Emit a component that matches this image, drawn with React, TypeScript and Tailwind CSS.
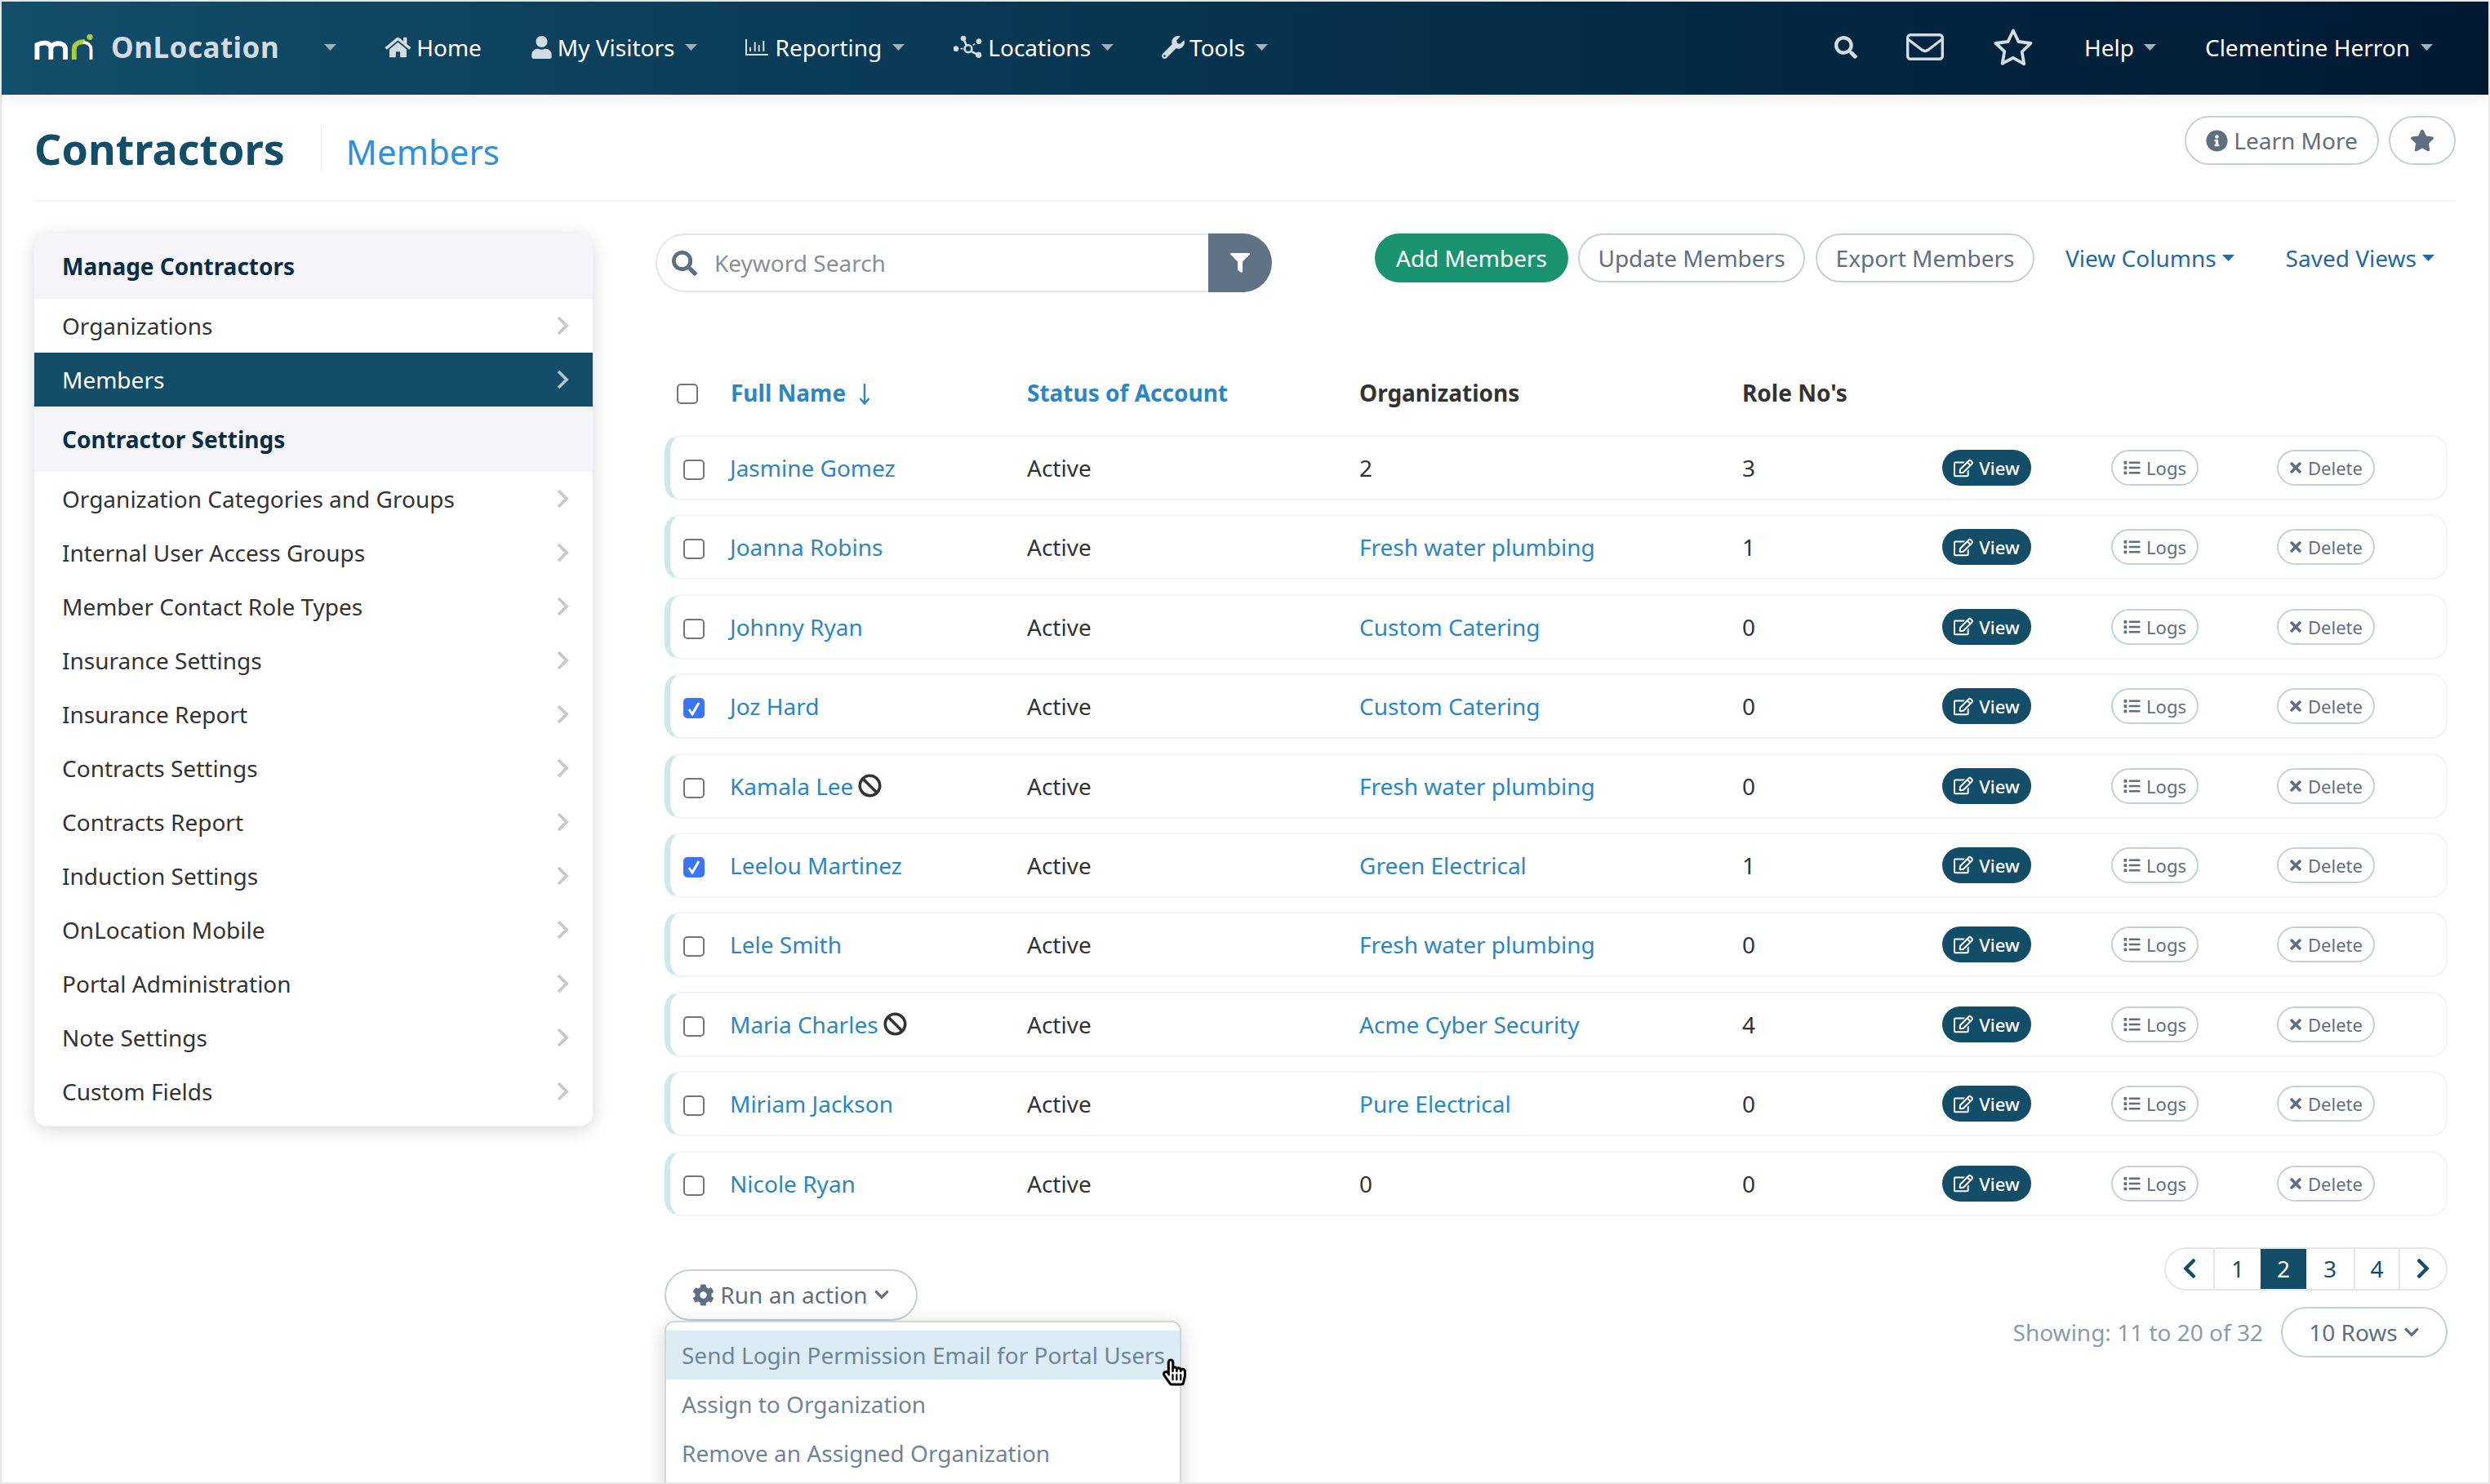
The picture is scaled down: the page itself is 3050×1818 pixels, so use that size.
import { FaBan, FaChevronDown, FaChevronLeft, FaChevronRight, FaCog, FaFilter, FaHandPointer, FaHome, FaInfoCircle, FaList, FaRegEdit, FaRegHandPointer, FaSearch, FaStar, FaTimes, FaUser, FaWrench } from 'react-icons/fa';

const manageItems = ['Organizations', 'Members'];

const settingsItems = [
  'Organization Categories and Groups',
  'Internal User Access Groups',
  'Member Contact Role Types',
  'Insurance Settings',
  'Insurance Report',
  'Contracts Settings',
  'Contracts Report',
  'Induction Settings',
  'OnLocation Mobile',
  'Portal Administration',
  'Note Settings',
  'Custom Fields',
];

type Member = { name: string; org: string; roles: string; checked?: boolean; banned?: boolean };

const members: Member[] = [
  { name: 'Jasmine Gomez', org: '2', roles: '3' },
  { name: 'Joanna Robins', org: 'Fresh water plumbing', roles: '1' },
  { name: 'Johnny Ryan', org: 'Custom Catering', roles: '0' },
  { name: 'Joz Hard', org: 'Custom Catering', roles: '0', checked: true },
  { name: 'Kamala Lee', org: 'Fresh water plumbing', roles: '0', banned: true },
  { name: 'Leelou Martinez', org: 'Green Electrical', roles: '1', checked: true },
  { name: 'Lele Smith', org: 'Fresh water plumbing', roles: '0' },
  { name: 'Maria Charles', org: 'Acme Cyber Security', roles: '4', banned: true },
  { name: 'Miriam Jackson', org: 'Pure Electrical', roles: '0' },
  { name: 'Nicole Ryan', org: '0', roles: '0' },
];

function Caret({ className }: { className: string }) {
  return (
    <svg viewBox="0 0 15 8" className={className}>
      <path d="M0 0h15L7.5 8z" fill="currentColor" />
    </svg>
  );
}

function MriLogo() {
  return (
    <svg viewBox="0 0 72 34" className="h-[34px] w-[72px]">
      <g fill="none" strokeWidth="5.8">
        <path d="M3.4 32V14c5-3 17-5 17 5v13M20.5 19c0-9 17.600-9 17.600 0v13" stroke="#fff" />
        <path d="M48.8 32V19c0-6 6-9 13-9" stroke="#a9cf38" />
        <path d="M60 10.600c6 1 9.500 3 9.500 9V32" stroke="#fff" strokeWidth="3.8" />
      </g>
      <circle cx="68" cy="4.300" r="3.600" fill="#a9cf38" />
    </svg>
  );
}

function ReportingIcon() {
  return (
    <svg viewBox="0 0 28 20" className="h-[20px] w-[28px] text-[#d3dce2]" fill="none" stroke="currentColor">
      <path d="M1 0v19h27" strokeWidth="2" />
      <path d="M6 10v5M11.700 3.500V15M16.700 7v8M22.300 2v13" strokeWidth="2" />
    </svg>
  );
}

function NetworkIcon() {
  return (
    <svg viewBox="0 0 35 27" className="h-[27px] w-[35px] text-[#d3dce2]" fill="none" stroke="currentColor">
      <circle cx="18" cy="15.700" r="4.400" strokeWidth="2.600" />
      <path d="M12 3l4 9M21 18.700l9.500 4.600" strokeWidth="2.600" />
      <path d="M31 6.700l-9.500 6M3 15.700h10" strokeWidth="1.800" strokeDasharray="3 2.500" />
      <circle cx="12" cy="3" r="3" fill="currentColor" />
      <circle cx="31" cy="6.700" r="3" fill="currentColor" />
      <circle cx="30.700" cy="23.300" r="3.300" fill="currentColor" />
      <circle cx="3" cy="15.700" r="3" fill="currentColor" />
    </svg>
  );
}

function MailIcon() {
  return (
    <svg viewBox="0 0 46 33" className="h-[33px] w-[46px] text-[#d3dce2]" fill="none" stroke="currentColor" strokeWidth="3.400">
      <rect x="1.700" y="1.700" width="42.600" height="29.600" rx="3.500" />
      <path d="M2 7l17 13c2.500 1.800 5.500 1.800 8 0L44 7" />
    </svg>
  );
}

function StarIcon() {
  return (
    <svg viewBox="0 0 48 46" className="h-[46px] w-[48px] text-[#d3dce2]" fill="none" stroke="currentColor" strokeWidth="3.800" strokeLinejoin="round">
      <path d="M24 2.500l6.500 13.500 15 2-10.800 10.500 2.600 14.800L24 35.800l-13.300 7 2.600-14.800L2.500 18l15-2z" />
    </svg>
  );
}

function Checkbox({ checked }: { checked?: boolean }) {
  return (
    <span className={`mt-[3px] flex h-[25px] w-[26px] items-center justify-center rounded-[5px] border-2 ${checked ? 'border-[#3a74f8] bg-[#3a74f8]' : 'border-[#757575] bg-white'}`}>
      {checked && (
        <svg viewBox="0 0 16 18" className="h-[18px] w-[16px]" fill="none" stroke="#fff" strokeWidth="3">
          <path d="M2 10l4 6 8-14" />
        </svg>
      )}
    </span>
  );
}

function SideRow({ label, active }: { label: string; active?: boolean }) {
  return (
    <div className={`flex h-[66px] items-center justify-between pl-[34px] pr-[29px] ${active ? 'bg-[#134d68] text-white' : 'text-[#333]'}`}>
      <span>{label}</span>
      <svg viewBox="0 0 15 24" className={`h-[24px] w-[15px] ${active ? 'text-[#b4c4cd]' : 'text-[#c6c8c9]'}`} fill="none" stroke="currentColor" strokeWidth="3.800">
        <path d="M2 2l10 10L2 22" />
      </svg>
    </div>
  );
}

function SideHeading({ label }: { label: string }) {
  return <div className="flex h-[80px] items-center bg-[#f4f4f9] pl-[34px] font-bold text-[#0b2c45]">{label}</div>;
}

function PillButton({ children, className }: { children: React.ReactNode; className?: string }) {
  return <button className={`flex items-center rounded-full border-2 border-[#c3d1d5] bg-white text-[#5f6e82] ${className ?? ''}`}>{children}</button>;
}

function MemberRow({ member }: { member: Member }) {
  const orgIsLink = isNaN(Number(member.org));
  return (
    <div className="mb-[17.4px] flex h-[80px] items-center rounded-[20px] border-2 border-l-[7px] border-[#f1f4f5] border-l-[#cfe8ec]">
      <div className="flex w-[73px] shrink-0 pl-[16px] pt-[2px]">
        <Checkbox checked={member.checked} />
      </div>
      <div className="flex w-[364px] shrink-0 items-center text-[#2b86c5]">
        {member.name}
        {member.banned && <FaBan className="ml-[6px] h-[29px] w-[29px] text-[#333]" />}
      </div>
      <div className="w-[407px] shrink-0 text-[#333]">Active</div>
      <div className={`w-[469px] shrink-0 ${orgIsLink ? 'text-[#2b86c5]' : 'text-[#333]'}`}>{member.org}</div>
      <div className="w-[245px] shrink-0 text-[#333]">{member.roles}</div>
      <div className="w-[207px] shrink-0">
        <button className="flex h-[44px] w-[109px] items-center justify-center gap-[7px] rounded-full bg-[#134d68] text-[22px] font-medium text-white">
          <FaRegEdit className="h-[23px] w-[24px]" />
          View
        </button>
      </div>
      <div className="w-[203px] shrink-0">
        <PillButton className="h-[44px] w-[107px] justify-center gap-[7px] text-[22px]">
          <FaList className="h-[20px] w-[21px]" />
          Logs
        </PillButton>
      </div>
      <PillButton className="h-[44px] w-[120px] justify-center gap-[7px] text-[22px]">
        <FaTimes className="h-[20px] w-[16px]" />
        Delete
      </PillButton>
    </div>
  );
}

export default function App() {
  return (
    <div className="h-[1818px] w-[3050px] overflow-hidden border-2 border-[#e6e6e6] bg-white font-['Noto_Sans',sans-serif] text-[28px] leading-none">
      <header className="relative z-10 flex h-[114px] items-center bg-linear-to-r from-[#134e6a] to-[#011933] pb-[3px] pl-[40px] pr-[68px] text-white shadow-[0_6px_16px_rgba(0,0,0,0.07)]">
        <MriLogo />
        <span className="ml-[22px] text-[35px] font-bold tracking-[0.5px] text-[#d3dce2]">OnLocation</span>
        <Caret className="ml-[55px] h-[8px] w-[15px] text-[#9fb0bb]" />

        <FaHome className="ml-[59px] h-[28px] w-[33px] text-[#d3dce2]" />
        <span className="ml-[6px]">Home</span>

        <FaUser className="ml-[61px] h-[28px] w-[25px] text-[#d3dce2]" />
        <span className="ml-[7px]">My Visitors</span>
        <Caret className="ml-[12px] h-[8px] w-[15px] text-[#9fb0bb]" />

        <span className="ml-[59px]"><ReportingIcon /></span>
        <span className="ml-[9px]">Reporting</span>
        <Caret className="ml-[13px] h-[8px] w-[15px] text-[#9fb0bb]" />

        <span className="ml-[60px]"><NetworkIcon /></span>
        <span className="ml-[7px]">Locations</span>
        <Caret className="ml-[13px] h-[8px] w-[15px] text-[#9fb0bb]" />

        <FaWrench className="ml-[59px] h-[28px] w-[28px] text-[#d3dce2]" />
        <span className="ml-[6px]">Tools</span>
        <Caret className="ml-[13px] h-[8px] w-[15px] text-[#9fb0bb]" />

        <div className="ml-auto flex items-center">
          <FaSearch className="h-[28px] w-[28px] text-[#d3dce2]" />
          <span className="ml-[60px]"><MailIcon /></span>
          <span className="ml-[61px]"><StarIcon /></span>
          <span className="ml-[63px]">Help</span>
          <Caret className="ml-[12px] h-[8px] w-[15px] text-[#9fb0bb]" />
          <span className="ml-[60px]">Clementine Herron</span>
          <Caret className="ml-[13px] h-[8px] w-[15px] text-[#9fb0bb]" />
        </div>
      </header>

      <main className="pl-[40px] pr-[40px]">
        <div className="flex h-[131px] items-start justify-between border-b-2 border-[#f1f4f5]">
          <div className="mt-[38px] flex items-center">
            <h1 className="text-[52px] font-bold text-[#134d68]">Contractors</h1>
            <div className="ml-[44px] h-[55px] w-[1px] bg-[#e9edee]" />
            <span className="ml-[30px] mt-[8px] text-[42px] text-[#2d8fe0]">Members</span>
          </div>
          <div className="mt-[26px] flex gap-[12px]">
            <PillButton className="h-[60px] w-[238px] justify-center gap-[7px]">
              <FaInfoCircle className="h-[27px] w-[27px]" />
              Learn More
            </PillButton>
            <PillButton className="h-[60px] w-[82px] justify-center">
              <FaStar className="h-[28px] w-[30px]" />
            </PillButton>
          </div>
        </div>

        <div className="flex items-start pt-[39px]">
          <aside className="w-[684px] shrink-0 overflow-hidden rounded-[16px] bg-white pb-[10px] shadow-[0_4px_22px_rgba(0,0,0,0.16)]">
            <SideHeading label="Manage Contractors" />
            {manageItems.map((item) => (
              <SideRow key={item} label={item} active={item === 'Members'} />
            ))}
            <SideHeading label="Contractor Settings" />
            {settingsItems.map((item) => (
              <SideRow key={item} label={item} />
            ))}
          </aside>

          <section className="ml-[77px] flex-1">
            <div className="flex items-start">
              <div className="flex h-[72px] w-[677px] items-center rounded-l-full border-2 border-r-0 border-[#dfe7ea] pl-[18px]">
                <FaSearch className="h-[31px] w-[31px] text-[#5a6e85]" />
                <span className="ml-[21px] text-[#8a8f94]">Keyword Search</span>
              </div>
              <button className="flex h-[72px] w-[78px] items-center justify-center rounded-r-full bg-[#627286]">
                <FaFilter className="h-[24px] w-[24px] text-white" />
              </button>
              <button className="ml-[126px] h-[60px] w-[237px] rounded-full bg-[#1a9470] text-white">Add Members</button>
              <PillButton className="ml-[12px] h-[60px] w-[278px] justify-center">Update Members</PillButton>
              <PillButton className="ml-[13px] h-[60px] w-[268px] justify-center">Export Members</PillButton>
              <div className="ml-[38px] flex h-[60px] items-center text-[#1e6aa5]">
                View Columns
                <Caret className="ml-[7px] h-[8px] w-[15px]" />
              </div>
              <div className="ml-[63px] flex h-[60px] items-center text-[#1e6aa5]">
                Saved Views
                <Caret className="ml-[7px] h-[8px] w-[15px]" />
              </div>
            </div>

            <div className="ml-[26px] mb-[27px] mt-[98px] flex h-[50px] items-center font-bold">
              <div className="flex w-[66px] shrink-0">
                <Checkbox />
              </div>
              <div className="flex w-[363px] shrink-0 items-center text-[#2b86c5]">
                Full Name
                <svg viewBox="0 0 14 26" className="ml-[16px] mt-[4px] h-[26px] w-[14px]" fill="none" stroke="currentColor" strokeWidth="2.400">
                  <path d="M7 0v24M1.500 18l5.500 6.500 5.500-6.500" />
                </svg>
              </div>
              <div className="w-[407px] shrink-0 text-[#2b86c5]">Status of Account</div>
              <div className="w-[469px] shrink-0 text-[#333]">Organizations</div>
              <div className="text-[#333]">Role No's</div>
            </div>

            <div className="ml-[11px] w-[2184px]">
              {members.map((member) => (
                <MemberRow key={member.name} member={member} />
              ))}

              <div className="mt-[38px] flex items-start justify-between">
                <div className="relative mt-[27px]">
                  <PillButton className="h-[63px] w-[310px] justify-center gap-[7px]">
                    <FaCog className="h-[27px] w-[27px]" />
                    Run an action
                    <FaChevronDown className="h-[20px] w-[20px]" />
                  </PillButton>
                  <div className="absolute left-0 top-[63px] z-10 h-[270px] w-[633px] rounded-t-[12px] border-2 border-[#d3d5d7] bg-white pt-[10px] text-[#6f8498] shadow-[0_6px_24px_rgba(0,0,0,0.18)]">
                    <div className="flex h-[60px] items-center bg-[#dcecf5] pl-[19px]">Send Login Permission Email for Portal Users</div>
                    <div className="flex h-[60px] items-center pl-[19px]">Assign to Organization</div>
                    <div className="flex h-[60px] items-center pl-[19px]">Remove an Assigned Organization</div>
                    <div className="absolute left-[608px] top-[42px] h-[38px] w-[29px]">
                      <FaHandPointer className="absolute inset-0 h-full w-full text-white" />
                      <FaRegHandPointer className="absolute inset-0 h-full w-full text-black" />
                    </div>
                  </div>
                </div>

                <div className="flex flex-col items-end">
                  <div className="flex h-[53px] items-center overflow-hidden rounded-full border-2 border-[#e3e7ea] text-[#134d68]">
                    <div className="flex h-full w-[58px] items-center justify-center"><FaChevronLeft className="h-[28px] w-[18px]" /></div>
                    <div className="flex h-full w-[58px] items-center justify-center border-l-2 border-[#e3e7ea]">1</div>
                    <div className="flex h-full w-[56px] items-center justify-center bg-[#134d68] text-white">2</div>
                    <div className="flex h-full w-[58px] items-center justify-center">3</div>
                    <div className="flex h-full w-[55px] items-center justify-center border-l-2 border-[#e3e7ea]">4</div>
                    <div className="flex h-full w-[58px] items-center justify-center border-l-2 border-[#e3e7ea]"><FaChevronRight className="h-[28px] w-[18px]" /></div>
                  </div>
                  <div className="mt-[20px] flex items-center">
                    <span className="text-[#8a9cac]">Showing: 11 to 20 of 32</span>
                    <PillButton className="ml-[22px] h-[62px] w-[204px] justify-center gap-[7px]">
                      10 Rows
                      <FaChevronDown className="h-[20px] w-[20px]" />
                    </PillButton>
                  </div>
                </div>
              </div>
            </div>
          </section>
        </div>
      </main>
    </div>
  );
}
